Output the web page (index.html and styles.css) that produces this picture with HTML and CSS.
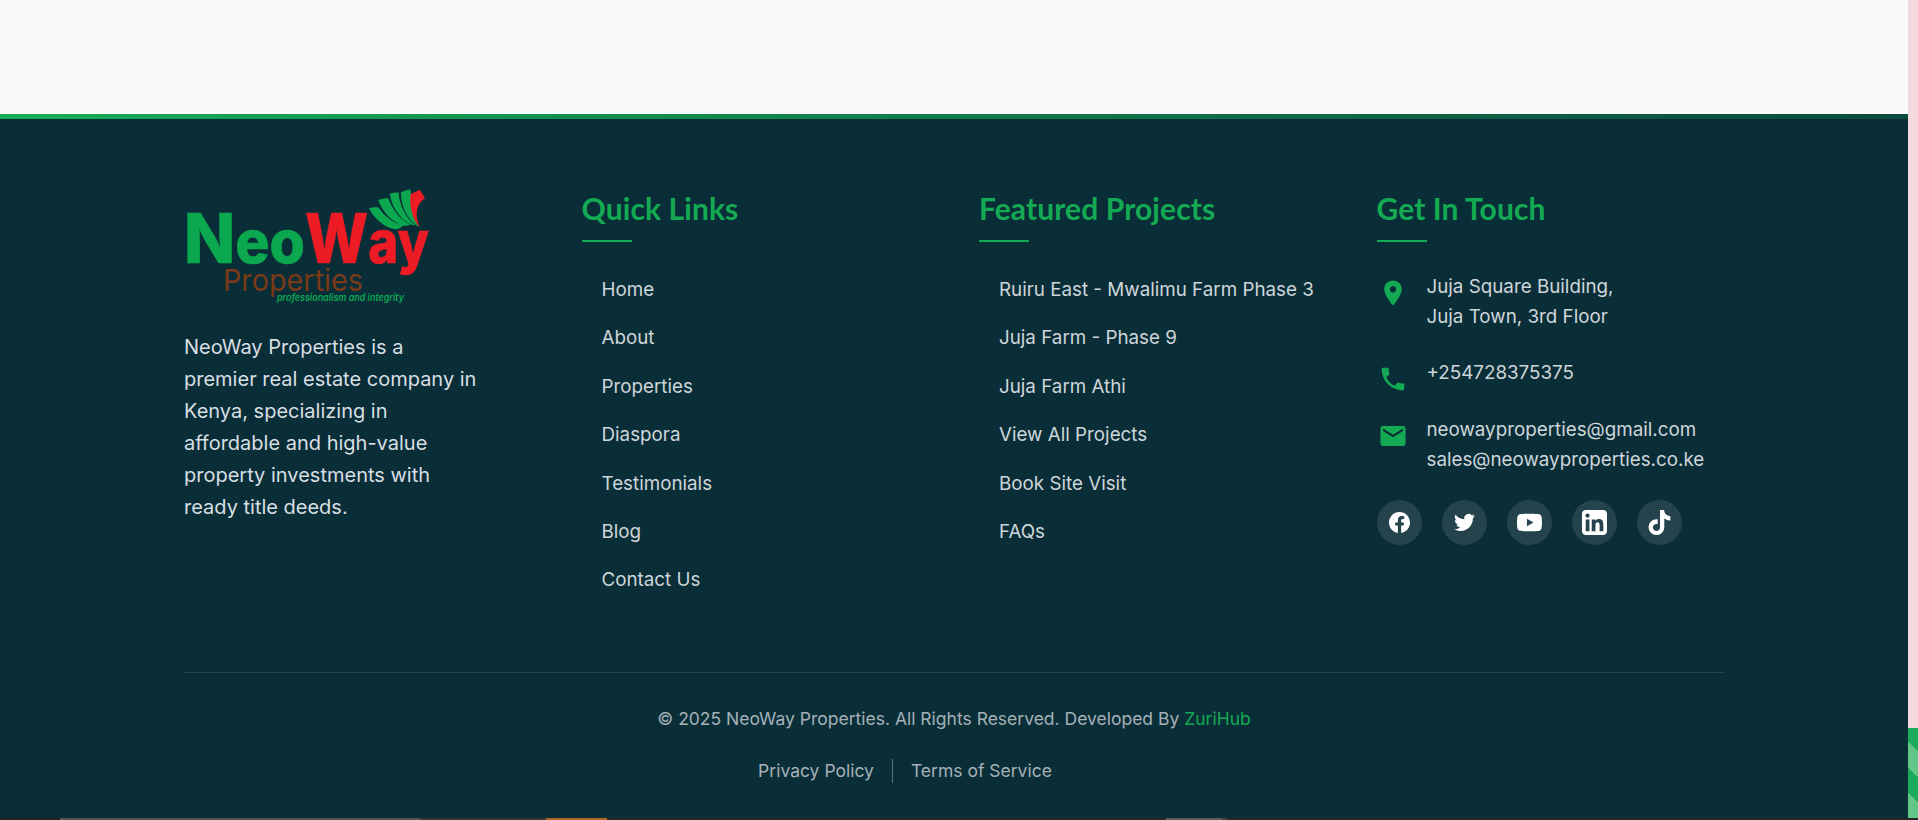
FILE: index.html
```html
<!DOCTYPE html>
<html lang="en">
<head>
<meta charset="utf-8">
<title>NeoWay Properties</title>
<link rel="stylesheet" href="styles.css">
</head>
<body>
<div class="top">
<div class="page">
  <main class="content"></main>
  <footer class="footer">
    <div class="container">
      <div class="grid">
        <section class="about">
          <svg class="logo" viewBox="0 0 250 120" width="250" height="120" role="img" aria-label="NeoWay Properties">
            <g transform="translate(-14 -16) scale(.33333)">
              <g fill="#0ba84f">
                <path d="M597 115C605 112 616 111 625 112C640 135 665 158 700 166C695 172 688 177 680 178C650 178 615 150 597 115z"/>
                <path d="M625 91C634 87 645 85 655 85C665 115 690 150 722 165C710 168 700 168 690 164C660 150 635 120 625 91z"/>
                <path d="M660 71C668 68 677 67 686 68C688 105 708 145 736 166C724 166 714 160 704 152C680 130 662 100 660 71z"/>
                <path d="M693 67C702 63 712 60 722 58C722 100 730 140 746 170C736 166 726 156 716 142C700 120 692 90 693 67z"/>
              </g>
              <path fill="#ed1c24" d="M722 72C730 68 742 63 750 60L765 85C742 98 730 135 751 173C730 155 716 110 722 72z"/>
            </g>
            <text class="logo-neo" x="0" y="77" textLength="121" lengthAdjust="spacingAndGlyphs"><tspan class="logo-cap">N</tspan>eo</text>
            <text class="logo-way" x="121" y="77" textLength="124" lengthAdjust="spacingAndGlyphs"><tspan class="logo-cap">W</tspan>ay</text>
            <text class="logo-prop" x="39" y="105" textLength="140" lengthAdjust="spacingAndGlyphs">Properties</text>
            <text class="logo-tag" x="93" y="115" textLength="127" lengthAdjust="spacingAndGlyphs">professionalism and integrity</text>
          </svg>
          <p class="about-text">NeoWay Properties is a<br>premier real estate company in<br>Kenya, specializing in<br>affordable and high-value<br>property investments with<br>ready title deeds.</p>
        </section>
        <section>
          <h3 class="heading">Quick Links</h3>
          <ul class="links">
            <li><a>Home</a></li>
            <li><a>About</a></li>
            <li><a>Properties</a></li>
            <li><a>Diaspora</a></li>
            <li><a>Testimonials</a></li>
            <li><a>Blog</a></li>
            <li><a>Contact Us</a></li>
          </ul>
        </section>
        <section>
          <h3 class="heading">Featured Projects</h3>
          <ul class="links">
            <li><a>Ruiru East - Mwalimu Farm Phase 3</a></li>
            <li><a>Juja Farm - Phase 9</a></li>
            <li><a>Juja Farm Athi</a></li>
            <li><a>View All Projects</a></li>
            <li><a>Book Site Visit</a></li>
            <li><a>FAQs</a></li>
          </ul>
        </section>
        <section>
          <h3 class="heading">Get In Touch</h3>
          <div class="contact">
            <div class="contact-row">
              <svg class="contact-icon" viewBox="0 0 24 24"><path d="M12 2C8.13 2 5 5.13 5 9c0 5.25 7 13 7 13s7-7.75 7-13c0-3.87-3.13-7-7-7zm0 9.5a2.5 2.5 0 1 1 0-5 2.5 2.5 0 0 1 0 5z"/></svg>
              <div>Juja Square Building,<br>Juja Town, 3rd Floor</div>
            </div>
            <div class="contact-row">
              <svg class="contact-icon" viewBox="0 0 24 24"><path d="M6.62 10.79c1.44 2.83 3.76 5.14 6.59 6.59l2.2-2.2c.27-.27.67-.36 1.02-.24 1.12.37 2.33.57 3.57.57.55 0 1 .45 1 1V20c0 .55-.45 1-1 1-9.39 0-17-7.61-17-17 0-.55.45-1 1-1h3.5c.55 0 1 .45 1 1 0 1.25.2 2.45.57 3.57.11.35.03.74-.25 1.02l-2.2 2.2z"/></svg>
              <div>+254728375375</div>
            </div>
            <div class="contact-row">
              <svg class="contact-icon" viewBox="0 0 24 24"><path d="M20 4H4c-1.1 0-2 .9-2 2v12c0 1.1.9 2 2 2h16c1.1 0 2-.9 2-2V6c0-1.100-.9-2-2-2zm0 4-8 5-8-5V6l8 5 8-5v2z"/></svg>
              <div>neowayproperties@gmail.com<br>sales@neowayproperties.co.ke</div>
            </div>
          </div>
          <div class="socials">
            <a class="social"><svg class="ico-sm" viewBox="0 0 24 24"><path d="M24 12.07C24 5.4 18.63 0 12 0S0 5.400 0 12.070c0 6.030 4.390 11.030 10.130 11.930v-8.440H7.080v-3.490h3.050V9.410c0-3.030 1.790-4.700 4.530-4.700 1.310 0 2.690.23 2.690.23v2.970h-1.510c-1.490 0-1.960.93-1.960 1.880v2.280h3.330l-.53 3.490h-2.800V24C19.610 23.100 24 18.100 24 12.070z"/></svg></a>
            <a class="social"><svg class="ico-sm" viewBox="0 0 24 24"><path d="M23.950 4.570a10 10 0 0 1-2.820.77 4.960 4.960 0 0 0 2.160-2.720c-.95.550-2 .96-3.130 1.190a4.920 4.920 0 0 0-8.380 4.480C7.690 8.100 4.070 6.130 1.640 3.160a4.820 4.820 0 0 0-.67 2.480c0 1.710.87 3.210 2.190 4.100a4.900 4.900 0 0 1-2.230-.62v.06a4.920 4.920 0 0 0 3.950 4.830 4.900 4.900 0 0 1-2.210.080 4.940 4.940 0 0 0 4.600 3.420A9.870 9.870 0 0 1 0 19.540a14 14 0 0 0 7.560 2.210c9.050 0 14-7.500 14-13.980 0-.21 0-.42-.020-.63a9.940 9.940 0 0 0 2.410-2.570z"/></svg></a>
            <a class="social"><svg class="ico-lg" viewBox="0 0 24 24"><path d="M23.500 6.190a3.020 3.020 0 0 0-2.120-2.140C19.500 3.550 12 3.550 12 3.550s-7.500 0-9.380.5A3.020 3.020 0 0 0 .5 6.190C0 8.070 0 12 0 12s0 3.930.5 5.810a3.020 3.020 0 0 0 2.120 2.140c1.880.5 9.380.5 9.380.5s7.500 0 9.380-.5a3.020 3.020 0 0 0 2.120-2.140C24 15.930 24 12 24 12s0-3.930-.5-5.810zM9.550 15.570V8.430L15.820 12l-6.270 3.570z"/></svg></a>
            <a class="social"><svg class="ico-lg" viewBox="0 0 24 24"><path d="M20.450 0H3.550C1.600 0 0 1.600 0 3.550v16.900C0 22.400 1.600 24 3.550 24h16.900c1.950 0 3.550-1.600 3.550-3.550V3.550C24 1.600 22.400 0 20.450 0zM7.120 20.450H3.560V9h3.560v11.450zM5.340 7.430a2.060 2.060 0 1 1 0-4.120 2.060 2.060 0 0 1 0 4.120zm15.110 13.020h-3.550v-5.570c0-1.330-.03-3.040-1.850-3.040-1.860 0-2.140 1.450-2.140 2.940v5.670H9.350V9h3.410v1.560h.05c.48-.9 1.640-1.850 3.370-1.850 3.600 0 4.270 2.370 4.270 5.450v6.290z"/></svg></a>
            <a class="social"><svg class="ico-lg" viewBox="0 0 24 24"><path d="M12.530.02C13.840 0 15.140.01 16.440 0c.08 1.530.63 3.090 1.750 4.170 1.120 1.110 2.700 1.620 4.240 1.790v4.030c-1.440-.05-2.890-.35-4.200-.97-.57-.26-1.100-.59-1.620-.93-.01 2.920.010 5.840-.020 8.750-.08 1.400-.54 2.790-1.350 3.940-1.310 1.920-3.580 3.170-5.910 3.210-1.430.080-2.860-.31-4.080-1.030-2.020-1.190-3.440-3.370-3.650-5.710-.02-.5-.03-1-.01-1.490.18-1.900 1.120-3.720 2.580-4.960 1.660-1.440 3.980-2.130 6.150-1.720.02 1.480-.04 2.960-.04 4.440-.99-.32-2.150-.23-3.020.37-.63.41-1.110 1.040-1.360 1.750-.21.51-.15 1.070-.14 1.610.24 1.640 1.820 3.020 3.500 2.870 1.120-.01 2.190-.66 2.770-1.610.19-.33.4-.67.41-1.060.1-1.790.06-3.570.070-5.360.01-4.030-.01-8.050.02-12.070z"/></svg></a>
          </div>
        </section>
      </div>
      <div class="bottom">
        <p class="copy">© 2025 NeoWay Properties. All Rights Reserved. Developed By <a class="brand">ZuriHub</a></p>
        <div class="legal"><a>Privacy Policy</a><span class="sep"></span><a>Terms of Service</a></div>
      </div>
    </div>
  </footer>
</div>
<aside class="rail"><span class="rail-top"></span><span class="rail-stripes"></span></aside>
</div>
<div class="shelf"><span class="s1"></span><span class="s2"></span><span class="s3"></span><span class="s4"></span><span class="s5"></span><span class="s6"></span><span class="s7"></span></div>
</body>
</html>
```
FILE: styles.css
```css
* { box-sizing: border-box; }
html, body { margin: 0; height: 820px; overflow: hidden; }
body { display: flex; flex-direction: column; font-family: Inter, "Liberation Sans", sans-serif; background: #fafafa; }
.top { flex: 1; min-height: 0; display: flex; }
.page { flex: 1; min-width: 0; display: flex; flex-direction: column; }
.content { height: 114px; flex: none; background: #fafafa; }
.footer { flex: 1; background: #0a2e38; border-top: 5px solid; border-image: linear-gradient(90deg, #16ad56, #0b4a3e) 1; color: #ced6da; }
.container { width: 1540px; margin: 0 auto; padding-top: 67px; }
.grid { display: grid; grid-template-columns: repeat(4, 1fr); column-gap: 50px; height: 486px; }
.logo { display: block; margin-bottom: 25px; overflow: visible; }
.logo-neo { font: 800 59px Inter, sans-serif; fill: #0ba84f; stroke: #0ba84f; stroke-width: .6px; }
.logo-way { font: 800 59px Inter, sans-serif; fill: #ed1c24; stroke: #ed1c24; stroke-width: .6px; }
.logo-cap { font-size: 69px; }
.logo-prop { font: 400 30px Inter, sans-serif; fill: #7a3a16; }
.logo-tag { font: italic 600 10px Inter, sans-serif; fill: #0ba84f; }
.about-text { margin: 0; font-size: 20px; line-height: 32px; color: #d8dfe3; }
.heading { margin: 4px 0 36px; padding-bottom: 16px; position: relative; font: 700 30px/36px Lato, sans-serif; letter-spacing: .1px; color: #14aa53; }
.heading::after { content: ""; position: absolute; left: 0; bottom: 0; width: 50px; height: 2px; background: #14aa53; }
.links { list-style: none; margin: 0; padding: 0 0 0 20px; display: flex; flex-direction: column; gap: 24px; font-size: 18.800px; line-height: 24.400px; }
.contact { display: flex; flex-direction: column; gap: 27px; font-size: 18.800px; line-height: 29.600px; margin-top: -6px; }
.contact-row { display: flex; gap: 19px; }
.contact-icon { width: 30px; height: 30px; flex: none; fill: #14aa53; margin: 6px 0 -6px 1px; }
.socials { display: flex; gap: 20px; margin-top: 26px; }
.social { width: 45px; height: 45px; border-radius: 50%; background: #25434d; display: flex; align-items: center; justify-content: center; }
.social svg { fill: #fff; }
.ico-sm { width: 21px; height: 21px; }
.ico-lg { width: 25px; height: 25px; }
.bottom { border-top: 1px solid #23424d; padding-top: 34px; display: flex; flex-direction: column; align-items: center; gap: 28px; color: #a5b1b7; font-size: 17.500px; line-height: 24px; }
.copy { margin: 0; }
.brand { color: #14aa53; }
.legal { display: flex; align-items: center; gap: 18px; margin-right: 98px; }
.sep { width: 1px; height: 24px; background: #5a7078; }
.shelf { height: 2px; flex: none; background: #2a2423; display: flex; }
.shelf span { display: block; height: 2px; flex: none; }
.s1 { width: 60px; background: #1f2420; }
.s2 { width: 360px; background: #555; }
.s3 { width: 126px; background: #3a382f; }
.s4 { width: 61px; background: #b0682a; }
.s5 { width: 559px; }
.s6 { width: 56px; background: #5c5a5a; }
.s7 { width: 5px; background: #444; }
.rail { width: 10px; flex: none; display: flex; flex-direction: column; background: #f3d9dd; }
.rail-top { height: 728px; flex: none; }
.rail-stripes { flex: 1; background: repeating-linear-gradient(45deg, #62c688 0 18px, #1bab5b 18px 36px); }
```
